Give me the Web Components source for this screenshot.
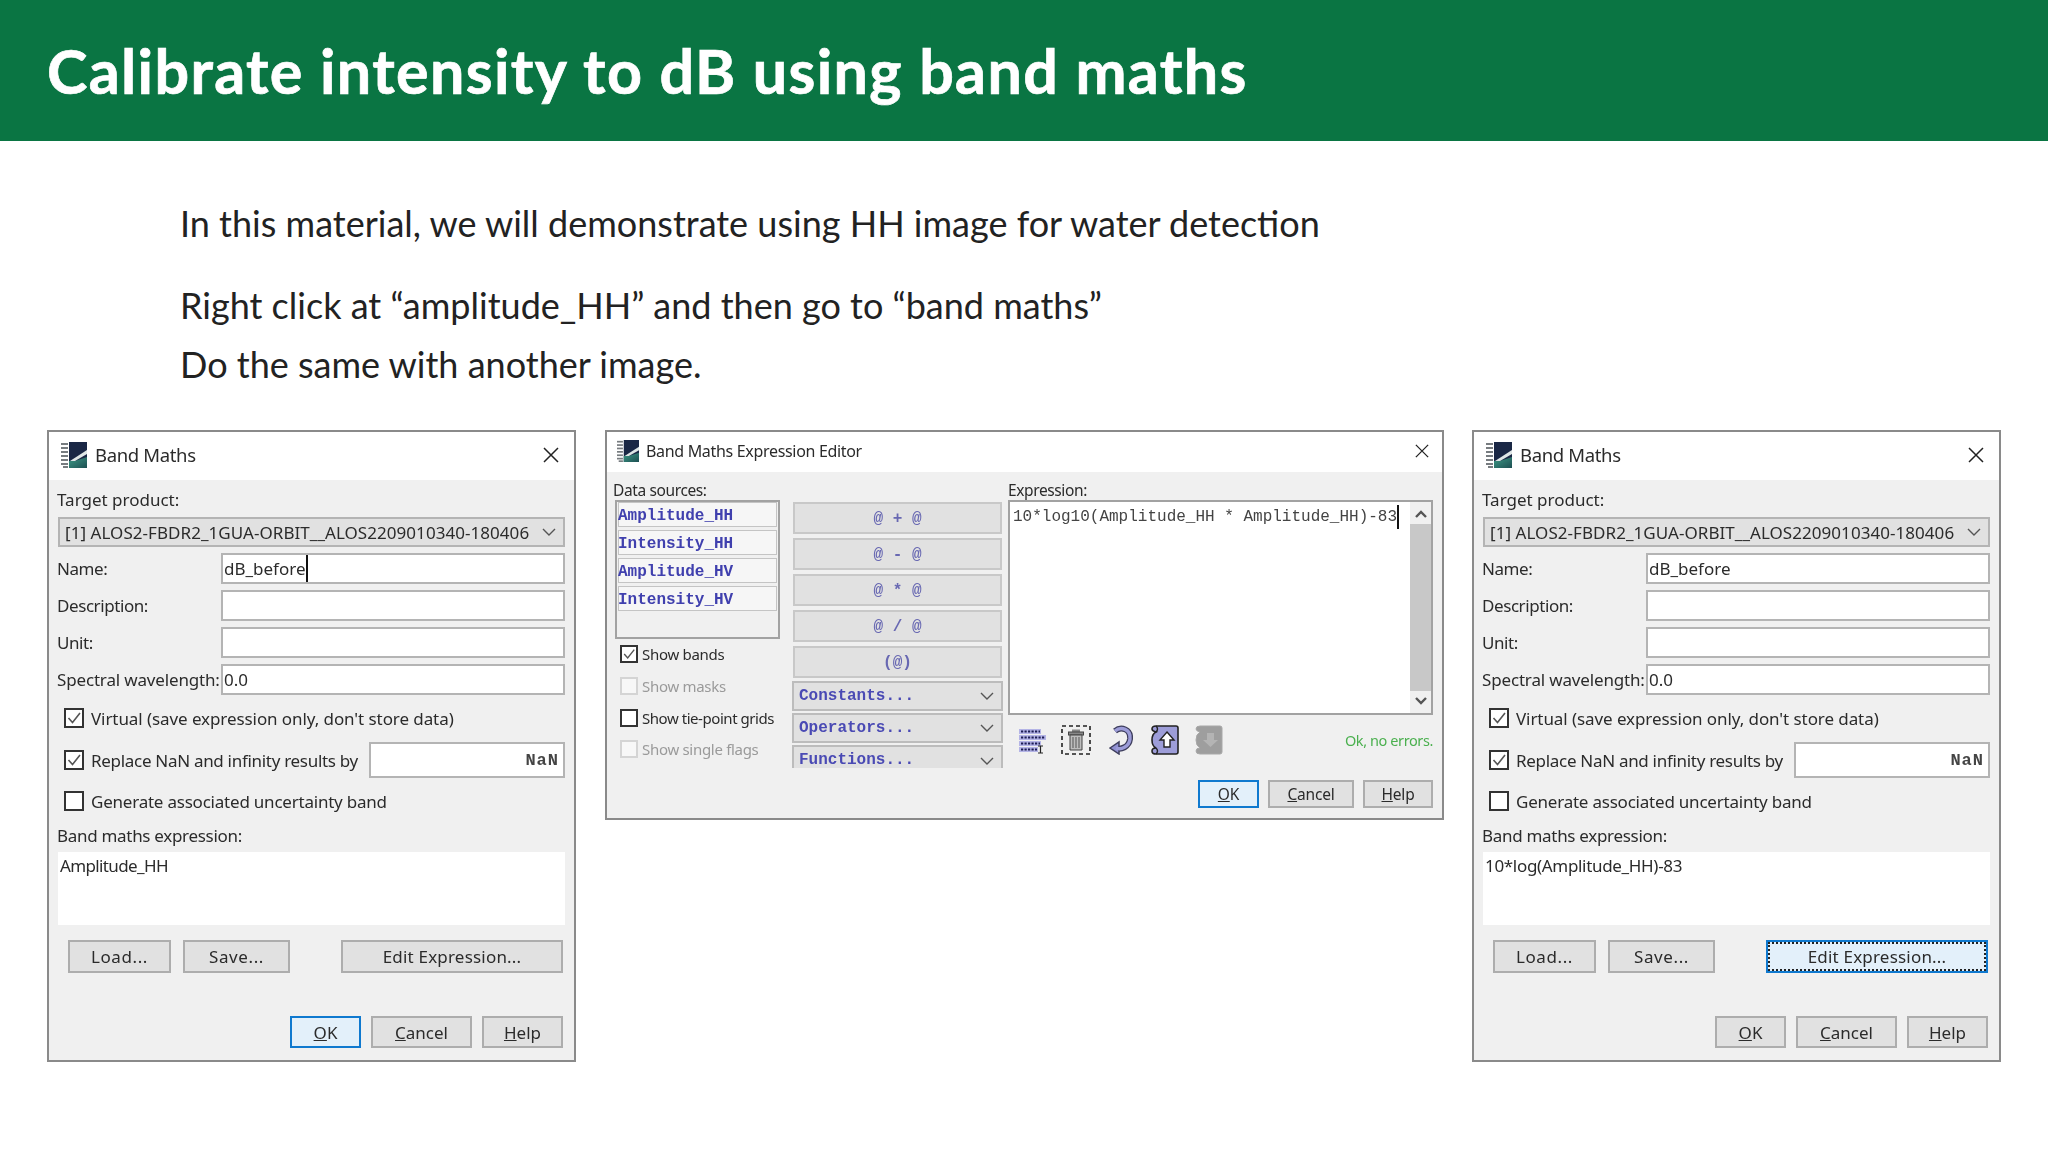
<!DOCTYPE html>
<html>
<head>
<meta charset="utf-8">
<title>Calibrate intensity to dB using band maths</title>
<style>
    html, body { margin: 0; background: #fff; }
    body { width: 2048px; height: 1152px; overflow: hidden; font-family: "Noto Sans", sans-serif; }
    .windows { display: flex; align-items: flex-start; padding: 37px 0 0 47px; }
    .windows > :nth-child(2) { margin-left: 29px; }
    .windows > :nth-child(3) { margin-left: 28px; }
</style>
</head>
<body>
<slide-header>Calibrate intensity to dB using band maths</slide-header>
<slide-copy>
    <p>In this material, we will demonstrate using HH image for water detection</p>
    <p class="next">Right click at “amplitude_HH” and then go to “band maths”</p>
    <p class="last">Do the same with another image.</p>
</slide-copy>
<div class="windows">
    <band-maths-dialog name-caret default-ok expression="Amplitude_HH" style="--expr-track: -0.63px"></band-maths-dialog>
    <expression-editor></expression-editor>
    <band-maths-dialog focus-edit expression="10*log(Amplitude_HH)-83"></band-maths-dialog>
</div>

<script>
const UI_FONT = `"Noto Sans", "Open Sans", sans-serif`;
const MONO_FONT = `"Liberation Mono", monospace`;

class SlideHeader extends HTMLElement {
    constructor() {
        super();
        this.attachShadow({ mode: "open" });
        this.shadowRoot.innerHTML = `
            <style>
                :host {
                    display: flex;
                    align-items: center;
                    height: 141px;
                    padding-left: 47px;
                    background: #0a7543;
                    color: #fff;
                    font: 700 61px "Lato", sans-serif;
                    letter-spacing: 1.37px;
                    -webkit-text-stroke: 0.7px #fff;
                }
            </style>
            <slot></slot>
        `;
    }
}

class SlideCopy extends HTMLElement {
    constructor() {
        super();
        this.attachShadow({ mode: "open" });
        this.shadowRoot.innerHTML = `
            <style>
                :host {
                    display: block;
                    padding: 53px 0 0 180px;
                    color: #222;
                    font: 400 36px/58px "Lato", sans-serif;
                }
                ::slotted(p) { margin: 0; }
                ::slotted(p.next) { margin-top: 24px; }
                ::slotted(p.last) { margin-top: 1px; }
            </style>
            <slot></slot>
        `;
    }
}

class SnapWindow extends HTMLElement {
    constructor() {
        super();
        this.attachShadow({ mode: "open" });
        const label = this.getAttribute("label");
        this.shadowRoot.innerHTML = `
            <style>
                :host {
                    display: flex;
                    flex-direction: column;
                    box-sizing: border-box;
                    border: 2px solid #8a8a8a;
                    background: #f0f0f0;
                    color: #2b2b2b;
                    font-family: ${UI_FONT};
                    filter: blur(0.35px);
                }
                .bar {
                    display: flex;
                    align-items: center;
                    flex: none;
                    box-sizing: border-box;
                    height: var(--bar-h, 48px);
                    padding: 0 var(--bar-right, 15px) 3px var(--bar-left, 12px);
                    background: #fff;
                    font-size: var(--bar-size, 18.5px);
                    letter-spacing: var(--bar-track, -0.35px);
                }
                .logo { width: var(--logo, 26px); height: var(--logo, 26px); margin-right: var(--logo-gap, 8px); }
                .close { width: var(--x, 16px); height: var(--x, 16px); margin-left: auto; }
            </style>
            <div class="bar">
                <svg class="logo" viewBox="0 0 26 26">
                    <defs>
                        <linearGradient id="sea" x1="0" y1="0" x2="1" y2="1">
                            <stop offset="0" stop-color="#3d9a86"/>
                            <stop offset="1" stop-color="#1d4f52"/>
                        </linearGradient>
                    </defs>
                    <rect width="26" height="26" fill="#fff"/>
                    <rect x="8" y="0" width="18" height="26" fill="#1a2745"/>
                    <path d="M8 26 L8 19 L14 19 L26 15 L26 26 Z" fill="url(#sea)"/>
                    <path d="M9 19 L26 8 L26 12 L14 19 Z" fill="#dfe6e6"/>
                    <g fill="#777c80">
                        <rect x="0" y="1" width="7" height="2"/><rect x="0" y="5" width="7" height="2"/>
                        <rect x="0" y="9" width="7" height="2"/><rect x="0" y="13" width="7" height="2"/>
                        <rect x="0" y="17" width="7" height="2"/><rect x="0" y="21" width="7" height="2"/>
                        <rect x="2" y="24" width="5" height="2"/>
                    </g>
                </svg>
                <span>${label}</span>
                <svg class="close" viewBox="0 0 16 16"><path d="M1 1 L15 15 M15 1 L1 15" stroke="#222" stroke-width="1.5" fill="none"/></svg>
            </div>
            <slot></slot>
        `;
    }
}

class WinButton extends HTMLElement {
    constructor() {
        super();
        this.attachShadow({ mode: "open" });
        this.shadowRoot.innerHTML = `
            <style>
                :host {
                    display: flex;
                    align-items: center;
                    justify-content: center;
                    box-sizing: border-box;
                    flex: none;
                    border: 2px solid #adadad;
                    background: #e1e1e1;
                    color: #2b2b2b;
                    font-size: var(--btn-size, 17px);
                    letter-spacing: var(--btn-track, 0);
                    height: 100%;
                }
                :host([default]) { border-color: #0f79cf; background: #e3f0fa; }
                :host([focused]) { border-color: #0f79cf; background: #e3f0fa; outline: 2px dotted #222; outline-offset: -4px; }
            </style>
            <slot></slot>
        `;
    }
}

class ComboBox extends HTMLElement {
    constructor() {
        super();
        this.attachShadow({ mode: "open" });
        this.shadowRoot.innerHTML = `
            <style>
                :host {
                    display: flex;
                    align-items: center;
                    box-sizing: border-box;
                    border: 2px solid #b4b4b4;
                    background: #e1e1e1;
                    padding: 0 7px 0 5px;
                }
                svg { width: 14px; height: 8px; margin-left: auto; flex: none; }
            </style>
            <slot></slot>
            <svg viewBox="0 0 14 8"><path d="M1 1 L7 7 L13 1" stroke="#555" stroke-width="1.4" fill="none"/></svg>
        `;
    }
}

class CheckRow extends HTMLElement {
    constructor() {
        super();
        this.attachShadow({ mode: "open" });
        this.shadowRoot.innerHTML = `
            <style>
                :host {
                    display: flex;
                    align-items: center;
                    gap: var(--check-gap, 7px);
                    letter-spacing: var(--check-track, -0.22px);
                    white-space: nowrap;
                }
                .box {
                    display: block;
                    box-sizing: border-box;
                    flex: none;
                    width: var(--check, 20px);
                    height: var(--check, 20px);
                    border: 2px solid #333;
                    background: #fff;
                }
                svg { display: none; width: 100%; height: 100%; }
                :host([checked]) svg { display: block; }
                :host([disabled]) { color: #9a9a9a; }
                :host([disabled]) .box { border-color: #d4d4d4; background: #f7f7f7; }
            </style>
            <span class="box"><svg viewBox="0 0 16 16"><path d="M2.5 8 L6.5 12.5 L14 3" stroke="#555" stroke-width="1.6" fill="none"/></svg></span>
            <span><slot></slot></span>
        `;
    }
}

class TextField extends HTMLElement {
    constructor() {
        super();
        this.attachShadow({ mode: "open" });
        this.shadowRoot.innerHTML = `
            <style>
                :host {
                    display: flex;
                    align-items: center;
                    box-sizing: border-box;
                    border: 2px solid #b4b4b4;
                    background: #fff;
                    padding: 0 1px;
                    letter-spacing: 0;
                    white-space: nowrap;
                }
                :host([caret]) span { border-right: 2px solid #111; padding: 2px 0; }
            </style>
            <span><slot></slot></span>
        `;
    }
}

const bandMathsTemplate = document.createElement("template");
bandMathsTemplate.innerHTML = `
    <style>
        :host { display: block; flex: none; width: 529px; height: 632px; font-size: 17px; }
        snap-window { height: 100%; }
        .body { display: flex; flex-direction: column; padding: 9px 9px 0 8px; letter-spacing: -0.42px; }
        .label { height: 22px; line-height: 22px; }
        .target { letter-spacing: 0; }
        combo-box { height: 30px; margin: 6px 0 0 1px; letter-spacing: 0.05px; white-space: nowrap; }
        .row { display: grid; grid-template-columns: 164px 1fr; height: 31px; margin-top: 6px; align-items: stretch; white-space: nowrap; }
        .row span { align-self: center; }
        .row .wave { letter-spacing: -0.16px; }
        .checks { display: flex; flex-direction: column; padding-left: 7px; }
        .checks > check-row { height: 20px; }
        .virtual { margin-top: 13px; --check-track: -0.08px; }
        .replace { display: flex; justify-content: space-between; align-items: center; height: 36px; margin-top: 14px; --check-track: -0.3px; }
        .replace text-field { justify-content: flex-end; box-sizing: border-box; width: 196px; height: 36px; padding-right: 4px; font: 700 17px ${MONO_FONT}; letter-spacing: 1px; color: #444; }
        .checks .generate { margin-top: 13px; }
        .expr-label { margin-top: 14px; letter-spacing: -0.3px; }
        .expr { height: 73px; margin: 5px 0 0 1px; padding: 2px 3px 0 2px; box-sizing: border-box; background: #fff; line-height: 24px; letter-spacing: var(--expr-track, -0.32px); }
        .actions { display: flex; height: 33px; margin-top: 15px; padding: 0 2px 0 11px; --btn-track: 0.2px; }
        .actions win-button:nth-child(1) { width: 103px; --btn-track: 0.6px; }
        .actions win-button:nth-child(2) { width: 107px; margin-left: 12px; --btn-track: 0.6px; }
        .actions win-button:nth-child(3) { width: 222px; margin-left: auto; }
        .confirm { display: flex; justify-content: flex-end; gap: 10px; height: 32px; margin-top: 43px; padding-right: 2px; }
        .ok { width: 71px; }
        .cancel { width: 101px; }
        .help { width: 81px; }
    </style>
    <snap-window label="Band Maths">
        <div class="body">
            <div class="label target">Target product:</div>
            <combo-box>[1] ALOS2-FBDR2_1GUA-ORBIT__ALOS2209010340-180406</combo-box>
            <div class="row"><span>Name:</span><text-field class="name">dB_before</text-field></div>
            <div class="row"><span>Description:</span><text-field></text-field></div>
            <div class="row"><span>Unit:</span><text-field></text-field></div>
            <div class="row"><span class="wave">Spectral wavelength:</span><text-field>0.0</text-field></div>
            <div class="checks">
                <check-row class="virtual" checked>Virtual (save expression only, don't store data)</check-row>
                <div class="replace">
                    <check-row checked>Replace NaN and infinity results by</check-row>
                    <text-field>NaN</text-field>
                </div>
                <check-row class="generate">Generate associated uncertainty band</check-row>
            </div>
            <div class="label expr-label">Band maths expression:</div>
            <div class="expr"></div>
            <div class="actions">
                <win-button>Load...</win-button>
                <win-button>Save...</win-button>
                <win-button class="edit">Edit Expression...</win-button>
            </div>
            <div class="confirm">
                <win-button class="ok"><u>O</u>K</win-button>
                <win-button class="cancel"><u>C</u>ancel</win-button>
                <win-button class="help"><u>H</u>elp</win-button>
            </div>
        </div>
    </snap-window>
`;

class BandMathsDialog extends HTMLElement {
    constructor() {
        super();
        this.attachShadow({ mode: "open" });
        this.shadowRoot.appendChild(bandMathsTemplate.content.cloneNode(true));
        const root = this.shadowRoot;
        root.querySelector(".expr").textContent = this.getAttribute("expression");
        if (this.hasAttribute("name-caret")) root.querySelector(".name").setAttribute("caret", "");
        if (this.hasAttribute("default-ok")) root.querySelector(".ok").setAttribute("default", "");
        if (this.hasAttribute("focus-edit")) root.querySelector(".edit").setAttribute("focused", "");
    }
}

const editorTemplate = document.createElement("template");
editorTemplate.innerHTML = `
    <style>
        :host { display: block; flex: none; width: 839px; height: 390px; font-size: 15.5px; }
        snap-window {
            height: 100%;
            --bar-h: 40px; --bar-left: 10px; --bar-right: 13px; --bar-size: 16px; --bar-track: -0.32px;
            --logo: 22px; --logo-gap: 7px; --x: 14px;
        }
        .body { padding: 8px 8px 0 6px; letter-spacing: -0.38px; }
        .cols { display: grid; grid-template-columns: 167px 211px 425px; column-gap: 12px; height: 286px; }
        .cols > :nth-child(3) { margin-left: -7px; width: 425px; }
        .label { height: 20px; line-height: 20px; }
        .list {
            display: flex; flex-direction: column; gap: 3px;
            box-sizing: border-box; height: 139px; margin-left: 2px; padding: 0 1px;
            border: 2px solid #a2a2a2; background: #f0f0f0;
            font: 700 16px ${MONO_FONT}; color: #4040ae; letter-spacing: 0;
        }
        .list div { box-sizing: border-box; height: 25px; line-height: 26px; border: 1px solid #c4c4c4; background: #f6f6f6; text-indent: -1px; }
        .flags { display: flex; flex-direction: column; margin-top: -1px; padding-left: 7px; font-size: 15px; --check: 18px; --check-gap: 4px; --check-track: -0.3px; }
        .flags check-row { height: 32px; }
        .flags .ties { height: 31px; --check-track: -0.45px; }
        .ops { display: flex; flex-direction: column; height: 264px; margin-top: 22px; font: 700 16px ${MONO_FONT}; letter-spacing: 0; }
        .ops win-button { flex: none; height: 32px; margin: 0 1px 4px; padding-top: 1px; font-size: 16px; color: #6868b2; letter-spacing: 0; border-color: #c8c8c8; }
        .ops .last { margin-bottom: 3px; }
        .ops combo-box { flex: none; height: 30px; margin-bottom: 2px; color: #4a4ab4; border-color: #bcbcbc; }
        .ops .cut { height: 23px; margin: 0; padding-top: 6px; line-height: 15px; border-bottom: none; }
        .box { display: flex; box-sizing: border-box; height: 215px; border: 2px solid #a2a2a2; background: #fff; }
        .expr { flex: 1; padding: 3px 0 0 3px; font: 400 16px/24px ${MONO_FONT}; letter-spacing: 0; color: #444; white-space: nowrap; }
        .expr span { border-right: 2px solid #111; padding: 3px 0; }
        .scroll { display: flex; flex-direction: column; flex: none; width: 21px; background: #f0f0f0; margin: 0 0 0 auto; }
        .scroll svg { width: 14px; height: 8px; flex: none; margin: 8px auto; }
        .thumb { flex: 1; margin: -2px 0; background: #c8c8c8; }
        .tools { display: flex; align-items: center; height: 30px; margin-top: 10px; padding-left: 11px; }
        .tools svg { flex: none; display: block; }
        .status { margin-left: auto; color: #4bb04f; font-size: 14.5px; letter-spacing: -0.4px; }
        .confirm { display: flex; justify-content: flex-end; gap: 9px; height: 28px; margin-top: 14px; padding-right: 1px; --btn-size: 15.5px; --btn-track: -0.2px; }
        .ok { width: 61px; }
        .cancel { width: 86px; }
        .help { width: 70px; }
    </style>
    <snap-window label="Band Maths Expression Editor">
        <div class="body">
            <div class="cols">
                <div>
                    <div class="label">Data sources:</div>
                    <div class="list">
                        <div>Amplitude_HH</div>
                        <div>Intensity_HH</div>
                        <div>Amplitude_HV</div>
                        <div>Intensity_HV</div>
                    </div>
                    <div class="flags">
                        <check-row checked>Show bands</check-row>
                        <check-row disabled>Show masks</check-row>
                        <check-row class="ties">Show tie-point grids</check-row>
                        <check-row disabled>Show single flags</check-row>
                    </div>
                </div>
                <div class="ops">
                    <win-button>@ + @</win-button>
                    <win-button>@ - @</win-button>
                    <win-button>@ * @</win-button>
                    <win-button>@ / @</win-button>
                    <win-button class="last">(@)</win-button>
                    <combo-box>Constants...</combo-box>
                    <combo-box>Operators...</combo-box>
                    <combo-box class="cut">Functions...</combo-box>
                </div>
                <div>
                    <div class="label">Expression:</div>
                    <div class="box">
                        <div class="expr"><span>10*log10(Amplitude_HH * Amplitude_HH)-83</span></div>
                        <div class="scroll">
                            <svg viewBox="0 0 14 8"><path d="M2 7 L7 2 L12 7" stroke="#555" stroke-width="2.4" fill="none"/></svg>
                            <div class="thumb"></div>
                            <svg viewBox="0 0 14 8"><path d="M2 1 L7 6 L12 1" stroke="#555" stroke-width="2.4" fill="none"/></svg>
                        </div>
                    </div>
                    <div class="tools">
                        <svg width="28" height="28" viewBox="0 0 28 28" style="margin-right:14px">
                            <g fill="#b4b4e6">
                                <rect x="0" y="3" width="22" height="5"/><rect x="0" y="9" width="27" height="5"/>
                                <rect x="0" y="15" width="22" height="5"/><rect x="0" y="21" width="19" height="5"/>
                            </g>
                            <g stroke="#1d1d55" stroke-width="2" stroke-dasharray="2.2 1.3" fill="none">
                                <path d="M2 5.5 H21"/><path d="M2 11.5 H26"/><path d="M2 17.5 H21"/><path d="M2 23.5 H18"/>
                            </g>
                            <path d="M19 20 H24 M21.5 20 V27 M19 27 H24" stroke="#222" stroke-width="1.2" fill="none"/>
                        </svg>
                        <svg width="30" height="30" viewBox="0 0 30 30" style="margin-right:18px">
                            <rect x="1" y="1" width="28" height="28" fill="none" stroke="#222" stroke-width="1.6" stroke-dasharray="4 3"/>
                            <rect x="11" y="4.5" width="8" height="2.5" fill="#888"/>
                            <rect x="7.5" y="7" width="15" height="3" fill="#888" stroke="#444"/>
                            <path d="M9 10 H21 V25 H9 Z" fill="#bdbdbd" stroke="#444"/>
                            <path d="M12 12 V23 M15 12 V23 M18 12 V23" stroke="#666" stroke-width="1.2"/>
                        </svg>
                        <svg width="24" height="30" viewBox="0 0 24 30" style="margin-right:18px">
                            <path d="M6 6 C12 1 22 4 21 14 C20 22 12 25 7 23" fill="none" stroke="#3d3d5c" stroke-width="6"/>
                            <path d="M1 23 L10 17 L10 29 Z" fill="#8f8fd0" stroke="#3d3d5c" stroke-width="1.5"/>
                            <path d="M6 6 C12 1 22 4 21 14 C20 22 12 25 7 23" fill="none" stroke="#9c9cd8" stroke-width="3.4"/>
                        </svg>
                        <svg width="28" height="30" viewBox="0 0 28 30" style="margin-right:16px">
                            <path d="M5 1 H25 Q27 1 27 3 V27 Q27 29 25 29 H5 Q1 29 1 26 Q1 23 5 23 Q1 21 1 15 Q1 9 5 7 Q1 6 1 4 Q1 1 5 1 Z" fill="#9d9dd8" stroke="#222" stroke-width="1.6"/>
                            <path d="M5 1 Q8 4 5 7 M5 23 Q8 26 5 29" fill="none" stroke="#222" stroke-width="1.4"/>
                            <path d="M16 7 L23 15 H19 V22 H13 V15 H9 Z" fill="#fff" stroke="#222" stroke-width="1.4"/>
                        </svg>
                        <svg width="28" height="30" viewBox="0 0 28 30">
                            <path d="M5 1 H25 Q27 1 27 3 V27 Q27 29 25 29 H5 Q1 29 1 26 Q1 23 5 23 Q1 21 1 15 Q1 9 5 7 Q1 6 1 4 Q1 1 5 1 Z" fill="#9e9e9e" stroke="#a8a8a8"/>
                            <path d="M12 8 H19 V15 H23 L15.5 22 L8 15 H12 Z" fill="#b4b4b4"/>
                        </svg>
                        <span class="status">Ok, no errors.</span>
                    </div>
                </div>
            </div>
            <div class="confirm">
                <win-button class="ok" default><u>O</u>K</win-button>
                <win-button class="cancel"><u>C</u>ancel</win-button>
                <win-button class="help"><u>H</u>elp</win-button>
            </div>
        </div>
    </snap-window>
`;

class ExpressionEditor extends HTMLElement {
    constructor() {
        super();
        this.attachShadow({ mode: "open" });
        this.shadowRoot.appendChild(editorTemplate.content.cloneNode(true));
    }
}

customElements.define("slide-header", SlideHeader);
customElements.define("slide-copy", SlideCopy);
customElements.define("snap-window", SnapWindow);
customElements.define("win-button", WinButton);
customElements.define("combo-box", ComboBox);
customElements.define("check-row", CheckRow);
customElements.define("text-field", TextField);
customElements.define("band-maths-dialog", BandMathsDialog);
customElements.define("expression-editor", ExpressionEditor);
</script>
</body>
</html>
